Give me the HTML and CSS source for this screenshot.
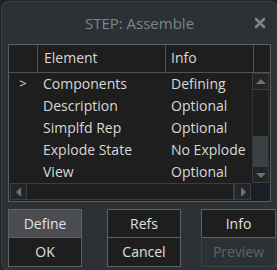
FILE: index.html
```html
<!DOCTYPE html>
<html>
<head>
<meta charset="utf-8">
<title>STEP: Assemble</title>
<link rel="stylesheet" href="styles.css">
</head>
<body>
<div class="win">
    <div class="title">STEP: Assemble<svg class="close" width="12" height="12" viewBox="0 0 12 12"><path d="M2 2L10 10M10 2L2 10" stroke="#7d8386" stroke-width="2.6" stroke-linecap="round"/></svg></div>
    <div class="box">
        <div class="head">
            <div class="c0"></div>
            <div class="c1">Element</div>
            <div class="c2">Info</div>
            <div class="c3"></div>
        </div>
        <div class="body">
            <div class="rows">
                <div class="row"><span class="c0">&gt;</span><span class="c1">Components</span><span class="c2">Defining</span></div>
                <div class="row"><span class="c0"></span><span class="c1">Description</span><span class="c2">Optional</span></div>
                <div class="row"><span class="c0"></span><span class="c1">Simplfd Rep</span><span class="c2">Optional</span></div>
                <div class="row"><span class="c0"></span><span class="c1">Explode State</span><span class="c2">No Explode</span></div>
                <div class="row"><span class="c0"></span><span class="c1">View</span><span class="c2">Optional</span></div>
            </div>
            <div class="vbar">
                <div class="sbtn up"></div>
                <div class="track"><div class="thumb"></div></div>
                <div class="sbtn down"></div>
            </div>
        </div>
        <div class="hbar">
            <div class="sbtn left"></div>
            <div class="htrack"></div>
            <div class="sbtn right"></div>
            <div class="corner"></div>
        </div>
    </div>
    <div class="btns">
        <div class="col">
            <div class="btn on">Define</div>
            <div class="btn">OK</div>
        </div>
        <div class="col">
            <div class="btn">Refs</div>
            <div class="btn">Cancel</div>
        </div>
        <div class="col">
            <div class="btn">Info</div>
            <div class="btn off">Preview</div>
        </div>
    </div>
</div>
</body>
</html>
```
FILE: styles.css
```css
/*reset*/
html,body,div,span{margin:0; padding:0;}
body{background:#1f2426; font-family:"Open Sans","Noto Sans",sans-serif; font-size:14px; color:#d8d8d8;}

/*window*/
.win{width:275px; height:268px; margin:1px 0 0 1px; border:1px solid #3d4346; border-radius:8px; background:#2b3134; overflow:hidden; position:relative;}
.title{height:42px; line-height:42px; text-align:center; font-size:15px; color:#7f8588;}
.close{position:absolute; top:15px; right:11px;}

/*grid box*/
.box{margin:0 6px; border:1px solid #5a5f62; background:#1e1e1e;}
.head{display:flex; height:27px; line-height:26px; border-bottom:1px solid #4d5255;}
.head div{border-right:1px solid #4d5255;}
.head .c0{width:28px;}
.head .c1{padding-left:6px; box-sizing:border-box; width:128px;}
.head .c2{width:88px; padding-left:5px; box-sizing:border-box;}
.head .c3{width:13px; border-right:none;}

.body{display:flex; height:110px;}
.rows{flex:1; overflow:hidden;}
.row{display:flex; height:22px; line-height:21px; white-space:nowrap;}
.row .c0{width:28px; text-align:center; font-size:13px;}
.row .c1{width:129px; padding-left:6px; box-sizing:border-box;}
.row .c2{padding-left:5px;}

/*scrollbars*/
.vbar{width:17px; margin-right:1px; display:flex; flex-direction:column; background:#1e1e1e;}
.sbtn{width:17px; height:17px; box-sizing:border-box; border:1px solid #3a3e40; background:#232526; position:relative;}
.sbtn:after{content:""; position:absolute; left:50%; top:50%; width:0; height:0; border:5px solid transparent;}
.up:after{border-bottom:5px solid #6d7173; border-top:none; margin:-3px 0 0 -5px;}
.down:after{border-top:5px solid #6d7173; border-bottom:none; margin:-2px 0 0 -5px;}
.left:after{border-right:5px solid #6d7173; border-left:none; margin:-5px 0 0 -3px;}
.right:after{border-left:5px solid #6d7173; border-right:none; margin:-5px 0 0 -2px;}
.track{flex:1; border:1px solid #2e3234; border-top:none; border-bottom:none; display:flex; flex-direction:column; justify-content:flex-end;}
.thumb{height:30px; margin-bottom:0; background:#3b4043;}

.hbar{display:flex; height:17px; margin-bottom:1px;}
.left{margin-left:1px;}
.htrack{flex:1; border:1px solid #3a3e40; border-left:none;}
.corner{width:17px; margin-left:1px; margin-right:1px; background:#1c1d26;}

/*buttons*/
.btns{display:flex; margin:7px 0 0 6px;}
.col{width:74px; display:flex; flex-direction:column; margin-right:25px;}
.col:nth-child(2){margin-right:20px;}
.col:last-child{width:75px; margin-right:0;}
.btn{height:29px; line-height:27px; box-sizing:border-box; border:1px solid #5c6164; background:#1e1e1e; text-align:center; font-size:14px; color:#e0e0e0;}
.btn + .btn{border-top:none;}
.btn.on{background:#4a4c51; border-color:#5c6164;}
.btn.off{background:#2b3134; border-color:#3c4245; color:#5f6568;}
```
